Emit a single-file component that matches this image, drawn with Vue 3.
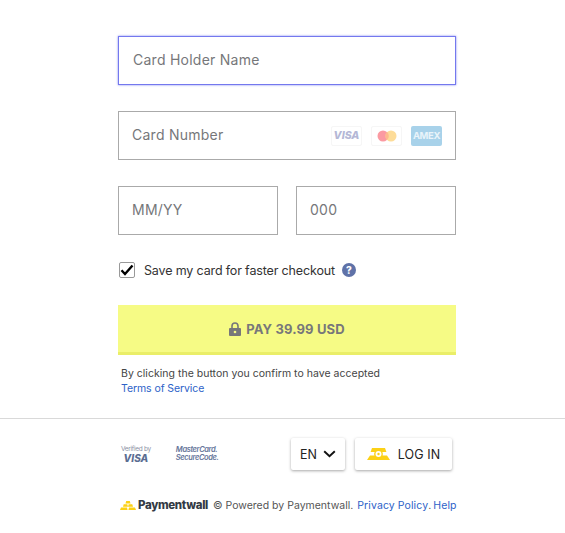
<template>
  <div class="page">
    <form class="card-form" @submit.prevent>
      <div class="field focused"><span class="placeholder">Card Holder Name</span></div>
      <div class="field">
        <span class="placeholder">Card Number</span>
        <div class="brands">
          <span class="brand visa">VISA</span>
          <span class="brand master">
            <svg width="22" height="12" viewBox="0 0 22 12">
              <circle cx="7" cy="6" r="5.5" fill="#fb9aa2" />
              <circle cx="15" cy="6" r="5.5" fill="#fddc98" />
              <path d="M11 1.9a5.5 5.5 0 0 1 0 8.2a5.5 5.5 0 0 1 0-8.2z" fill="#fdb98f" />
            </svg>
          </span>
          <span class="brand amex">AMEX</span>
        </div>
      </div>
      <div class="field-row">
        <div class="field"><span class="placeholder">MM/YY</span></div>
        <div class="field"><span class="placeholder">000</span></div>
      </div>

      <label class="save-card">
        <span class="checkbox">
          <svg width="14" height="12" viewBox="0 0 14 12">
            <path d="M1.5 6.2 5 10 12.5 1.5" fill="none" stroke="#000" stroke-width="2.4" />
          </svg>
        </span>
        <span>Save my card for faster checkout</span>
        <span class="help">?</span>
      </label>

      <button class="pay" type="button">
        <svg width="12" height="14" viewBox="0 0 12 14">
          <path d="M1 6h10a1 1 0 0 1 1 1v6a1 1 0 0 1-1 1H1a1 1 0 0 1-1-1V7a1 1 0 0 1 1-1z" fill="#77777a" />
          <path d="M3 6.5V4a3 3 0 0 1 6 0v2.5" fill="none" stroke="#77777a" stroke-width="1.6" />
          <circle cx="6" cy="10" r="1.3" fill="#f6fb85" />
        </svg>
        PAY {{ amount }} USD
      </button>

      <p class="terms">
        By clicking the button you confirm to have accepted<br />
        <a href="#">Terms of Service</a>
      </p>
    </form>

    <hr class="divider" />

    <footer class="footer">
      <div class="footer-top">
        <div class="badges">
          <div class="verified">
            <span class="verified-by">Verified by</span>
            <span class="verified-visa">VISA</span>
          </div>
          <div class="securecode">
            <span>MasterCard.</span>
            <span>SecureCode.</span>
          </div>
        </div>
        <div class="actions">
          <button class="lang" type="button">
            EN
            <svg width="13" height="8" viewBox="0 0 13 8">
              <path d="M1.2 1.2 6.5 6.3 11.8 1.2" fill="none" stroke="#111" stroke-width="1.9" />
            </svg>
          </button>
          <button class="login" type="button">
            <svg width="23" height="12" viewBox="0 0 23 12">
              <path d="M5 0h13l1.4 4H3.6z" fill="#fcd116" />
              <path d="M3 7.5h17L23 12H0z" fill="#fcd116" />
              <circle cx="11.5" cy="6" r="4.4" fill="#fcd116" />
              <circle cx="11.5" cy="6" r="3" fill="#fff" />
              <circle cx="11.5" cy="6" r="1.2" fill="#fcd116" />
            </svg>
            LOG IN
          </button>
        </div>
      </div>
      <div class="footer-bottom">
        <svg class="pw-logo" width="16" height="9" viewBox="0 0 16 9">
          <path d="M6.2 0h3.6l.7 2.5H5.5z" fill="#fcd116" />
          <path d="M3.7 3.2h3.6l.7 2.5H3zM8.7 3.2h3.6l.7 2.5H8z" fill="#fcd116" />
          <path d="M1 6.4h6l.6 2.6H0zM9 6.4h6l1 2.6H8.4z" fill="#fcd116" />
        </svg>
        <strong class="pw-name">Paymentwall</strong>
        <span class="powered">© Powered by Paymentwall.</span>
        <a href="#">Privacy Policy</a><span class="dot">.</span>
        <a href="#">Help</a>
      </div>
    </footer>
  </div>
</template>

<script setup>
const amount = '39.99'
</script>

<style>
body {
  background: #fff;
}
</style>

<style scoped>
.page {
  width: 565px;
  height: 533px;
  padding-top: 36px;
  box-sizing: border-box;
  overflow: hidden;
  font-family: Inter, "Liberation Sans", sans-serif;
  color: #333;
}

.card-form {
  width: 338px;
  margin-left: 118px;
  display: flex;
  flex-direction: column;
}

.field {
  height: 49px;
  box-sizing: border-box;
  border: 1px solid #aaa;
  display: flex;
  align-items: center;
  justify-content: space-between;
  padding: 0 13px;
  margin-bottom: 26px;
}

.field.focused {
  border-color: #7478ee;
  box-shadow: 0 0 2px rgba(100, 105, 240, 0.8);
  padding-left: 14px;
}

.placeholder {
  font-size: 14px;
  letter-spacing: 0.25px;
  color: #76777a;
  margin-top: -2px;
}

.brands {
  display: flex;
  gap: 9px;
}

.brand {
  width: 31px;
  height: 20px;
  box-sizing: border-box;
  display: flex;
  align-items: center;
  justify-content: center;
  border: 1px solid #f6f6f6;
  border-radius: 2px;
}

.visa {
  font-size: 10.5px;
  font-weight: 800;
  font-style: italic;
  color: #b4b7d6;
}

.amex {
  border: 0;
  background: #a8d2ea;
  color: #e9f4fa;
  font-size: 9.5px;
  font-weight: 700;
  letter-spacing: -0.4px;
}

.field-row {
  display: grid;
  grid-template-columns: 160px 160px;
  gap: 18px;
}

.save-card {
  display: flex;
  align-items: center;
  height: 16px;
  margin: 1px 0 27px 1px;
  font-size: 12.5px;
  letter-spacing: -0.15px;
  color: #333;
}

.checkbox {
  width: 16px;
  height: 16px;
  box-sizing: border-box;
  border: 1px solid #999;
  border-radius: 2px;
  display: flex;
  align-items: center;
  justify-content: center;
  margin-right: 9px;
}

.help {
  width: 14px;
  height: 14px;
  margin-left: 7px;
  border-radius: 50%;
  background: #5f72a8;
  color: #fff;
  font-size: 10px;
  font-weight: 800;
  letter-spacing: 0;
  display: flex;
  align-items: center;
  justify-content: center;
}

.pay {
  height: 50px;
  border: 0;
  border-bottom: 3px solid #eaee68;
  background: #f6fb85;
  color: #77777a;
  font-family: inherit;
  font-size: 13px;
  font-weight: 700;
  letter-spacing: 0.15px;
  display: flex;
  align-items: center;
  justify-content: center;
  gap: 5px;
  padding: 0;
}

.terms {
  margin: 11px 0 0 3px;
  font-size: 10.5px;
  line-height: 15px;
  letter-spacing: 0.02px;
  color: #444;
}

a {
  color: #2d62c8;
  text-decoration: none;
}

.terms a {
  letter-spacing: -0.08px;
}

.divider {
  margin: 22px 0 0;
  border: 0;
  border-top: 1px solid #d9d9d9;
}

.footer {
  width: 338px;
  margin-left: 118px;
}

.footer-top {
  display: flex;
  justify-content: space-between;
  align-items: center;
  margin-top: 19px;
  height: 32px;
}

.badges {
  display: flex;
  align-items: center;
  gap: 25px;
  margin-left: 3px;
}

.verified {
  display: flex;
  flex-direction: column;
  align-items: center;
  color: #8a8fa3;
}

.verified-by {
  font-size: 6.5px;
  line-height: 8px;
  letter-spacing: -0.3px;
}

.verified-visa {
  font-size: 10px;
  line-height: 11px;
  font-weight: 800;
  font-style: italic;
  color: #5b6d92;
}

.securecode {
  display: flex;
  flex-direction: column;
  font-size: 7.5px;
  line-height: 8px;
  font-weight: 600;
  font-style: italic;
  letter-spacing: -0.4px;
  color: #66759a;
}

.actions {
  display: flex;
  gap: 10px;
  margin-right: 4px;
}

.lang,
.login {
  height: 32px;
  border: 0;
  border-radius: 2px;
  background: #fff;
  box-shadow: 0 1px 3px rgba(0, 0, 0, 0.35);
  font-family: inherit;
  font-size: 12.5px;
  letter-spacing: 0.1px;
  color: #222;
  display: flex;
  align-items: center;
  padding: 0;
}

.lang {
  width: 54px;
  justify-content: center;
  gap: 6px;
}

.login {
  width: 97px;
  justify-content: center;
  gap: 8px;
}

.footer-bottom {
  display: flex;
  align-items: center;
  margin: 28px 0 0 2px;
  font-size: 10.5px;
  letter-spacing: 0.1px;
  white-space: nowrap;
  color: #555;
}

.pw-logo {
  flex-shrink: 0;
  margin-right: 2px;
}

.pw-name {
  font-size: 11.5px;
  font-weight: 800;
  letter-spacing: -0.33px;
  color: #333a44;
  margin-right: 5px;
}

.powered {
  margin-right: 4px;
  letter-spacing: 0;
}

.dot {
  margin-right: 2px;
}
</style>
